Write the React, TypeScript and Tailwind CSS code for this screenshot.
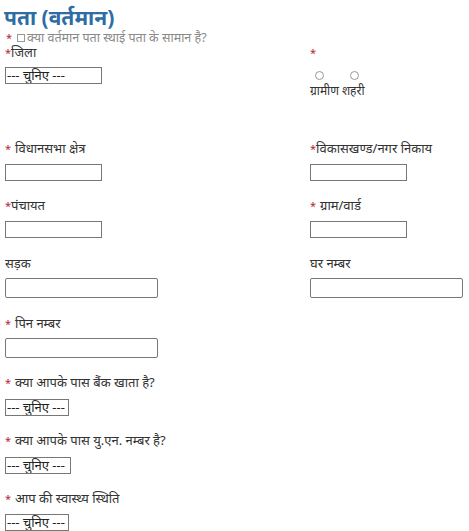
import React from 'react';

const Req = ({ space = false }: { space?: boolean }) => (
  <span className={`text-[#b3243b] text-[11px] ${space ? 'mr-[4px]' : ''}`}>*</span>
);

function Label({ text, req, space, className = '' }: { text: string; req?: boolean; space?: boolean; className?: string }) {
  return (
    <div className={`h-[16px] leading-[16px] whitespace-nowrap ${className}`}>
      {req && <Req space={space} />}
      {text}
    </div>
  );
}

function Choose({ w }: { w: string }) {
  return (
    <div className={`${w} h-[17px] border border-[#777] leading-[14px] text-[13px] pl-[1px] text-[#222] whitespace-nowrap overflow-hidden`}>
      --- चुनिए ---
    </div>
  );
}

const Small = () => <input className="block w-[97px] h-[17px] border border-[#777] bg-white" />;
const Wide = () => <input className="block w-[153px] h-[20px] border border-[#777] rounded-[2px] bg-white" />;

export default function App() {
  return (
    <div className="w-[469px] h-[531px] overflow-hidden bg-white px-[5px] pt-[3px] font-['Noto_Sans',sans-serif] text-[13px] text-[#333]">
      <h2 className="text-[21px] leading-[28px] font-bold text-[#2e6da4] -ml-[1px]">पता (वर्तमान)</h2>

      <div className="flex items-center h-[13px] leading-[13px] text-[12.5px] text-[#8a8a8a]">
        <span className="text-[#b3243b] text-[11px] ml-[1px] mr-[5px]">*</span>
        <span className="inline-block w-[8px] h-[8px] border border-[#999] mr-[2px]" />
        क्या वर्तमान पता स्थाई पता के सामान है?
      </div>

      <div className="grid grid-cols-[305px_154px]">
        {/* row 1 */}
        <div>
          <Label text="जिला" req />
          <div className="mt-[7px]">
            <Choose w="w-[97px]" />
          </div>
        </div>
        <div>
          <Label text="" req />
          <div className="flex mt-[11px] ml-[5px] gap-[26px]">
            <span className="w-[9px] h-[9px] rounded-full border border-[#999]" />
            <span className="w-[9px] h-[9px] rounded-full border border-[#999]" />
          </div>
          <div className="mt-[4px] h-[14px] leading-[14px] text-[12px]">ग्रामीण शहरी</div>
        </div>

        {/* row 2 */}
        <div className="mt-[42px]">
          <Label text="विधानसभा क्षेत्र" req space />
          <div className="mt-[8px]"><Small /></div>
        </div>
        <div className="mt-[42px]">
          <Label text="विकासखण्ड/नगर निकाय" req />
          <div className="mt-[8px]"><Small /></div>
        </div>

        {/* row 3 */}
        <div className="mt-[16px]">
          <Label text="पंचायत" req />
          <div className="mt-[8px]"><Small /></div>
        </div>
        <div className="mt-[16px]">
          <Label text="ग्राम/वार्ड" req space />
          <div className="mt-[8px]"><Small /></div>
        </div>

        {/* row 4 */}
        <div className="mt-[17px]">
          <Label text="सड़क" />
          <div className="mt-[7px]"><Wide /></div>
        </div>
        <div className="mt-[17px]">
          <Label text="घर नम्बर" />
          <div className="mt-[7px]"><Wide /></div>
        </div>

        {/* row 5 */}
        <div className="mt-[17px]">
          <Label text="पिन नम्बर" req space />
          <div className="mt-[7px]"><Wide /></div>
        </div>
        <div />
      </div>

      <div className="mt-[16px]">
        <Label text="क्या आपके पास बैंक खाता है?" req space />
        <div className="mt-[9px]"><Choose w="w-[64px]" /></div>
      </div>
      <div className="mt-[16px]">
        <Label text="क्या आपके पास यु.एन. नम्बर है?" req space />
        <div className="mt-[9px]"><Choose w="w-[66px]" /></div>
      </div>
      <div className="mt-[16px]">
        <Label text="आप की स्वास्थ्य स्थिति" req space />
        <div className="mt-[8px]"><Choose w="w-[64px]" /></div>
      </div>
    </div>
  );
}
